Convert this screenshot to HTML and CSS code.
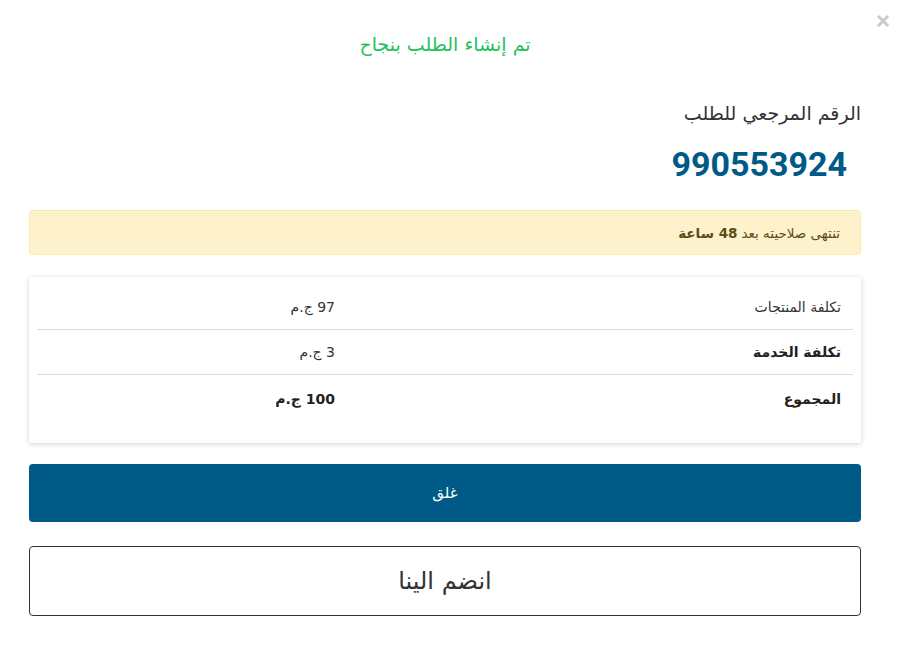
FILE: index.html
```html
<!DOCTYPE html>
<html lang="ar" dir="rtl">
<head>
<meta charset="utf-8">
<link rel="stylesheet" href="styles.css">
</head>
<body>
<div class="modal">
  <button class="close" aria-label="close">&times;</button>
  <h2 class="title">تم إنشاء الطلب بنجاح</h2>
  <div class="ref-label">الرقم المرجعي للطلب</div>
  <div class="ref-number">990553924</div>
  <div class="alert">تنتهى صلاحيته بعد <b>48 ساعة</b></div>
  <div class="card">
    <div class="row">
      <div class="label">تكلفة المنتجات</div>
      <div class="value">97 ج.م</div>
    </div>
    <div class="row">
      <div class="label strong">تكلفة الخدمة</div>
      <div class="value">3 ج.م</div>
    </div>
    <div class="row last">
      <div class="label strong">المجموع</div>
      <div class="value strong">100 ج.م</div>
    </div>
  </div>
  <button class="btn primary">غلق</button>
  <button class="btn outline">انضم الينا</button>
</div>
</body>
</html>
```
FILE: styles.css
```css
* { box-sizing: border-box; }
html, body { margin: 0; padding: 0; background: #fff; }
body {
  font-family: "DejaVu Sans", "Noto Sans", sans-serif;
  color: #333;
  width: 920px;
  height: 646px;
  overflow: hidden;
}
.modal {
  position: relative;
  width: 832px;
  margin-left: 29px;
  margin-right: 59px;
  padding-top: 31px;
}
.close {
  position: absolute;
  top: 11px;
  left: 847px;
  border: 0;
  background: none;
  color: #c8c8c8;
  font-size: 24px;
  font-weight: bold;
  font-family: "Liberation Sans", sans-serif;
  line-height: 20px;
  padding: 0;
  cursor: pointer;
}
.title {
  margin: 0;
  text-align: center;
  color: #1ec25c;
  font-size: 19px;
  font-weight: normal;
  line-height: 26px;
}
.ref-label {
  margin-top: 43px;
  font-size: 19px;
  line-height: 26px;
  color: #333;
}
.ref-number {
  margin-top: 18px;
  padding-right: 14px;
  font-family: Roboto, "Liberation Sans", sans-serif;
  font-weight: bold;
  font-size: 34px;
  line-height: 40px;
  color: #005a87;
}
.alert {
  margin-top: 26px;
  height: 45px;
  background: #fdf2cc;
  border: 1px solid #fbe9a9;
  border-radius: 4px;
  padding: 0 20px;
  display: flex;
  align-items: center;
  font-size: 13.5px;
  color: #5e4d18;
}
.alert b { margin-right: 4px; }
.card {
  margin-top: 22px;
  height: 166px;
  background: #fff;
  box-shadow: 0 1px 5px rgba(0,0,0,0.18);
  border-radius: 2px;
  padding: 8px 8px 0;
}
.row {
  display: flex;
  height: 45px;
  align-items: center;
  border-bottom: 1px solid #dcdcdc;
  font-size: 14px;
  color: #333;
}
.row.last { border-bottom: 0; height: 48px; }
.label { width: 510px; padding-right: 12px; }
.value { flex: 1; padding-right: 8px; }
.strong { font-weight: bold; color: #222; }
.btn {
  display: block;
  width: 100%;
  font-family: inherit;
  border-radius: 4px;
  cursor: pointer;
}
.primary {
  margin-top: 21px;
  height: 58px;
  background: #005a87;
  color: #fff;
  border: 0;
  font-size: 15px;
}
.outline {
  margin-top: 24px;
  height: 70px;
  background: #fff;
  color: #333;
  border: 1px solid #333;
  font-size: 24px;
}
```
